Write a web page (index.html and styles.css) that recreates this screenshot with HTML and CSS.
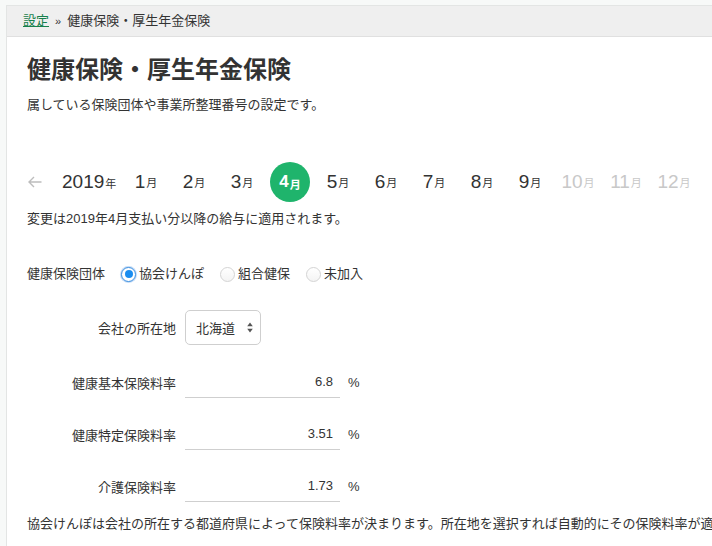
FILE: index.html
```html
<!DOCTYPE html>
<html lang="ja">
<head>
<meta charset="utf-8">
<title>健康保険・厚生年金保険</title>
<link rel="stylesheet" href="styles.css">
</head>
<body>
<div class="card">
  <div class="crumbs"><a href="#" class="crumb-link">設定</a><span class="sep">»</span><span>健康保険・厚生年金保険</span></div>
  <div class="content">
    <h1 class="title">健康保険・厚生年金保険</h1>
    <p class="desc">属している保険団体や事業所整理番号の設定です。</p>

    <div class="months">
      <span class="arrow"><svg width="14" height="12" viewBox="0 0 14 12"><path d="M13.5 6 H1.2 M6 1 L1 6 L6 11" fill="none" stroke="#bdbdbd" stroke-width="1.4"/></svg></span>
      <span class="year">2019<small>年</small></span>
      <span class="month">1<small>月</small></span>
      <span class="month">2<small>月</small></span>
      <span class="month">3<small>月</small></span>
      <span class="month"><span class="current">4<small>月</small></span></span>
      <span class="month">5<small>月</small></span>
      <span class="month">6<small>月</small></span>
      <span class="month">7<small>月</small></span>
      <span class="month">8<small>月</small></span>
      <span class="month">9<small>月</small></span>
      <span class="month disabled">10<small>月</small></span>
      <span class="month disabled">11<small>月</small></span>
      <span class="month disabled">12<small>月</small></span>
    </div>
    <p class="note">変更は2019年4月支払い分以降の給与に適用されます。</p>

    <div class="radio-row">
      <span class="radio-label">健康保険団体</span>
      <label class="radio"><span class="dot checked"></span>協会けんぽ</label>
      <label class="radio"><span class="dot"></span>組合健保</label>
      <label class="radio"><span class="dot"></span>未加入</label>
    </div>

    <div class="form">
      <div class="field">
        <span class="flabel">会社の所在地</span>
        <div class="select"><span>北海道</span><svg class="caret" width="6" height="11" viewBox="0 0 6 11"><path d="M3 0.5 L5.8 4.3 H0.2 Z M3 10.5 L5.8 6.7 H0.2 Z" fill="#555"/></svg></div>
      </div>
      <div class="field rate">
        <span class="flabel">健康基本保険料率</span>
        <div class="input">6.8</div>
        <span class="unit">%</span>
      </div>
      <div class="field rate">
        <span class="flabel">健康特定保険料率</span>
        <div class="input">3.51</div>
        <span class="unit">%</span>
      </div>
      <div class="field rate">
        <span class="flabel">介護保険料率</span>
        <div class="input">1.73</div>
        <span class="unit">%</span>
      </div>
    </div>

    <p class="foot">協会けんぽは会社の所在する都道府県によって保険料率が決まります。所在地を選択すれば自動的にその保険料率が適用されます。</p>
  </div>
</div>
</body>
</html>
```

FILE: styles.css
```css
html, body {
  margin: 0;
  padding: 0;
  height: 100%;
}
body {
  background: #f7f9f8;
  padding: 5px 0 0 6px;
  box-sizing: border-box;
  overflow: hidden;
  font-family: "Liberation Sans", "Noto Sans CJK JP", sans-serif;
  color: #333;
  font-size: 13px;
}
.card {
  height: 100%;
  box-sizing: border-box;
  background: #fff;
  border: 1px solid #e3e5e4;
  border-right: none;
  border-bottom: none;
  overflow: hidden;
}
.crumbs {
  height: 30px;
  line-height: 29px;
  background: #efefef;
  border-bottom: 1px solid #e0e0e0;
  padding-left: 16px;
  font-size: 13px;
  color: #333;
}
.crumb-link {
  color: #17804c;
  text-decoration: underline;
}
.sep {
  margin: 0 6px 0 6px;
  font-size: 11px;
}
.content {
  padding: 0 20px;
}
.title {
  margin: 17px 0 0;
  font-size: 24px;
  line-height: 32px;
  font-weight: bold;
  color: #333;
}
.desc {
  margin: 9px 0 0;
  line-height: 20px;
}
.months {
  margin-top: 47px;
  height: 40px;
  display: flex;
  align-items: center;
}
.months > * {
  flex-shrink: 0;
}
.arrow {
  width: 14px;
  height: 12px;
  margin-left: 1px;
  margin-right: 20px;
  display: flex;
}
.year {
  width: 60px;
  font-size: 19px;
  text-align: left;
}
.year small, .month small {
  font-size: 11px;
  margin-left: 1px;
}
.month {
  width: 48px;
  text-align: center;
  font-size: 19px;
  display: flex;
  justify-content: center;
  align-items: center;
}
.month.disabled {
  color: #c8c8c8;
}
.current {
  width: 40px;
  height: 40px;
  border-radius: 50%;
  background: #1fb46c;
  color: #fff;
  font-weight: bold;
  font-size: 17px;
  display: flex;
  align-items: center;
  justify-content: center;
}
.current small {
  font-size: 11px;
  margin-top: 3px;
}
.note {
  margin: 7px 0 0;
  line-height: 20px;
}
.radio-row {
  margin-top: 35px;
  display: flex;
  align-items: center;
  line-height: 20px;
}
.radio-label {
  margin-right: 16px;
}
.radio {
  display: flex;
  align-items: center;
  margin-right: 16px;
}
.dot {
  width: 15px;
  height: 15px;
  box-sizing: border-box;
  border-radius: 50%;
  border: 1px solid #d4d4d4;
  background: linear-gradient(#fff, #f4f4f4);
  margin-right: 3px;
  position: relative;
}
.dot.checked {
  border: 1px solid #3b8fe0;
  background: #fff;
  box-shadow: 0 0 0 1px rgba(80, 150, 230, 0.35);
}
.dot.checked::after {
  content: "";
  position: absolute;
  left: 2.5px;
  top: 2.5px;
  width: 8px;
  height: 8px;
  border-radius: 50%;
  background: #1a8df0;
}
.form {
  margin-top: 26px;
  display: flex;
  flex-direction: column;
  gap: 20px;
}
.field {
  display: flex;
  align-items: center;
}
.flabel {
  width: 149px;
  text-align: right;
  margin-right: 9px;
}
.select {
  width: 76px;
  height: 35px;
  box-sizing: border-box;
  border: 1px solid #cfcfcf;
  border-radius: 5px;
  display: flex;
  align-items: center;
  justify-content: space-between;
  padding: 0 7px 0 10px;
  font-size: 13px;
}
.form .field:first-child {
  margin-bottom: 1px;
}
.input {
  width: 155px;
  height: 32px;
  box-sizing: border-box;
  border-bottom: 1px solid #cfcfcf;
  text-align: right;
  padding-right: 7px;
  line-height: 31px;
}
.unit {
  margin-left: 8px;
}
.foot {
  margin: 12px 0 0;
  line-height: 20px;
  white-space: nowrap;
}
```
